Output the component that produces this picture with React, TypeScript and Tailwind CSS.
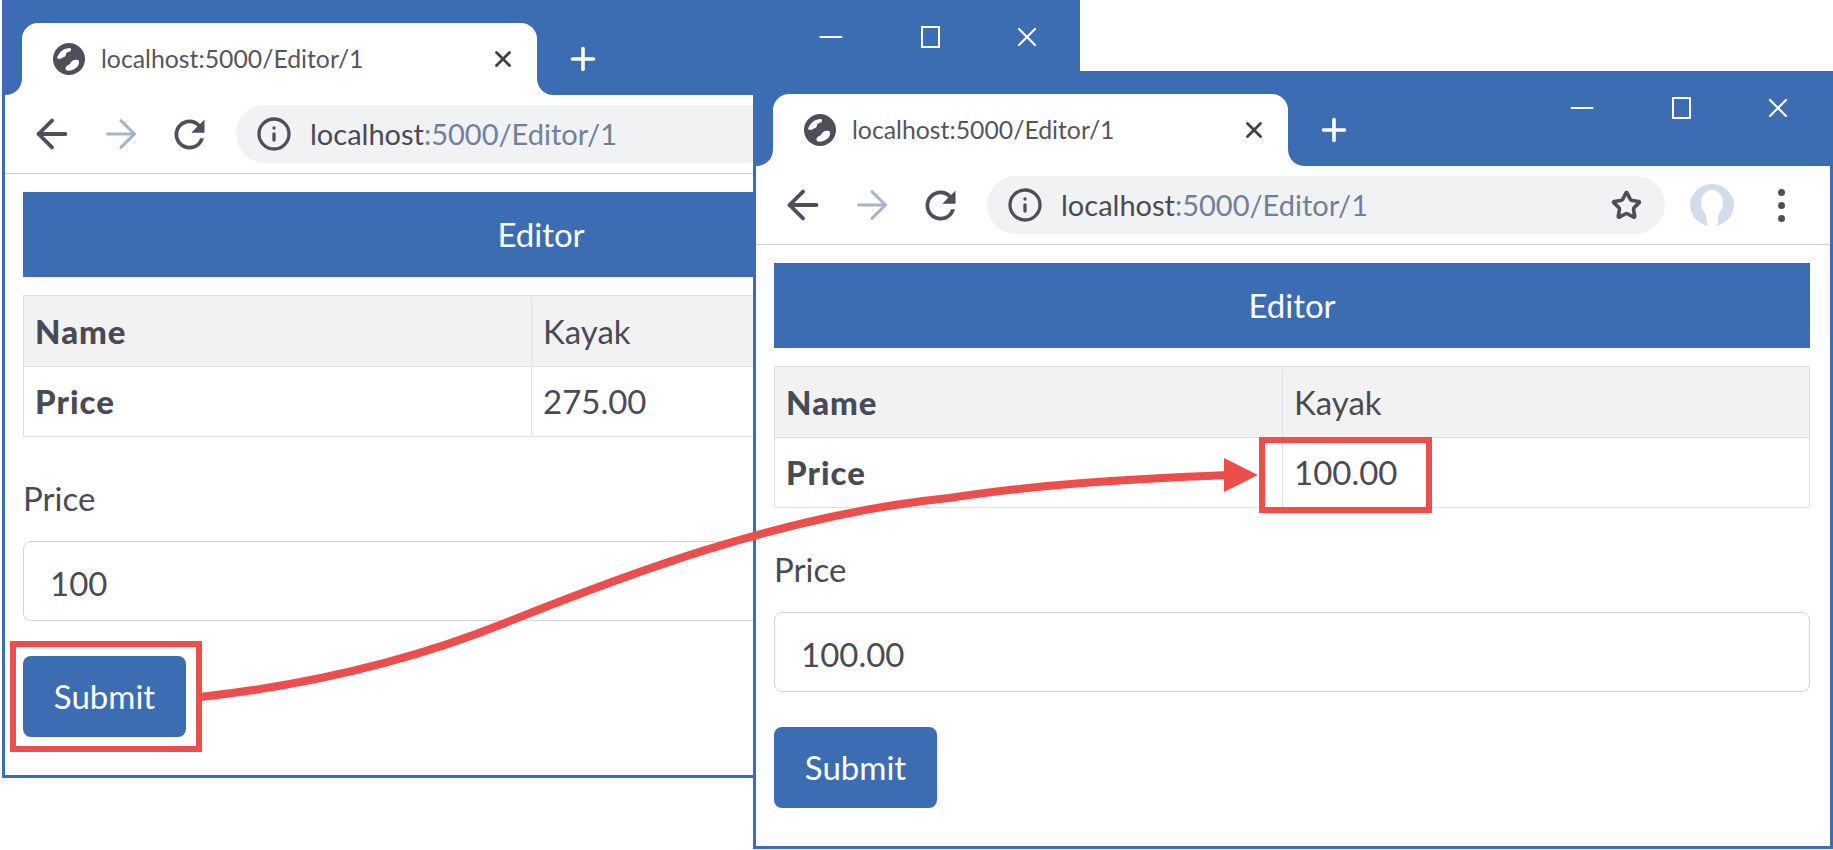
import React from 'react';
import { ArrowLeft, ArrowRight, Info, Star, X, Plus, Minus } from 'lucide-react';

const GlobeIcon = () => (
  <svg className="shrink-0" width="32" height="32" viewBox="0 0 32 32">
    <circle cx="16" cy="16" r="16" fill="#4f4f5b" />
    <path d="M4 15C6 9 11 5 17 5C19 6 18 9 15 9C12 10 14 13 11 14C9 15 6 17 4 15Z" fill="#fff" />
    <path d="M13 27C11 24 15 22 17 21C18 18 21 16 25 17C27 18 26 22 24 24C22 26 17 29 13 27Z" fill="#fff" />
  </svg>
);

const ReloadIcon = () => (
  <svg className="ml-[23px] shrink-0 text-[#4f4f5b]" width="45" height="45" viewBox="0 0 24 24" fill="currentColor">
    <path d="M17.65 6.35A7.958 7.958 0 0 0 12 4c-4.42 0-7.99 3.58-7.99 8s3.57 8 7.99 8c3.73 0 6.84-2.55 7.73-6h-2.08A5.99 5.99 0 0 1 12 18c-3.31 0-6-2.69-6-6s2.69-6 6-6c1.66 0 3.14.69 4.22 1.78L13 11h7V4l-2.35 2.35z" />
  </svg>
);

const Tab = () => (
  <div className="relative mt-[20px] flex h-[72px] w-[515px] items-center rounded-t-[16px] bg-white pl-[31px] pr-[21px]">
    {/* curved feet either side of the tab */}
    <svg className="absolute bottom-0 left-[-17px]" width="17" height="17" viewBox="0 0 17 17">
      <path d="M17 0V17H0C10 17 17 10 17 0Z" fill="#fff" />
    </svg>
    <svg className="absolute bottom-0 right-[-17px]" width="17" height="17" viewBox="0 0 17 17">
      <path d="M0 0V17H17C7 17 0 10 0 0Z" fill="#fff" />
    </svg>
    <GlobeIcon />
    <span className="ml-[16px] flex-1 text-[24.8px] text-[#55555f]">localhost:5000/Editor/1</span>
    <X className="h-[26px] w-[26px] text-[#3f3f4a]" strokeWidth={2.6} />
  </div>
);

const WindowControls = () => (
  <div className="absolute left-[808px] top-[16px] flex w-[230px] items-center justify-between text-white">
    <Minus className="h-[36px] w-[36px]" strokeWidth={1.4} />
    <div className="h-[22px] w-[19px] border-2 border-white" />
    <X className="h-[32px] w-[32px]" strokeWidth={1.6} />
  </div>
);

const Toolbar = () => (
  <div className="flex h-[79px] items-center border-b border-[#c9ced8] bg-white pr-[18px]">
    <ArrowLeft className="ml-[24px] h-[46px] w-[46px] shrink-0 text-[#4f4f5b]" strokeWidth={2} />
    <ArrowRight className="ml-[23px] h-[46px] w-[46px] shrink-0 text-[#a9b3c8]" strokeWidth={1.6} />
    <ReloadIcon />
    <div className="ml-[24px] flex h-[58px] w-[678px] shrink-0 items-center rounded-full bg-[#f1f2f4] pl-[20px] pr-[23px]">
      <Info className="h-[36px] w-[36px]  text-[#4f4f5b]" strokeWidth={2.2} />
      <span className="ml-[18px] flex-1 text-[29px] text-[#4a4a55]">
        localhost<span className="text-[#6f7f9f]">:5000/Editor/1</span>
      </span>
      <Star className="h-[31px] w-[31px] text-[#4f4f5b]" strokeWidth={2.8} />
    </div>
    <svg className="ml-[25px] shrink-0" width="44" height="44" viewBox="0 0 44 44">
      <ellipse cx="22" cy="22" rx="22" ry="21" fill="#d3dcea" />
      <ellipse cx="22" cy="20" rx="11" ry="13" fill="#fff" />
      <path d="M15 28H29L27 44H18Z" fill="#fff" />
    </svg>
    <div className="ml-[44px] flex flex-col gap-[6px]">
      <div className="h-[7px] w-[7px] rounded-full bg-[#4f4f5b]" />
      <div className="h-[7px] w-[7px] rounded-full bg-[#4f4f5b]" />
      <div className="h-[7px] w-[7px] rounded-full bg-[#4f4f5b]" />
    </div>
  </div>
);

const BrowserWindow = ({ price, inputValue, className }: { price: string; inputValue: string; className: string }) => (
  <div className={`absolute flex flex-col border-[3px] border-[#3c6db3] bg-white ${className}`}>
    <div className="relative flex h-[92px] shrink-0 bg-[#3c6db3] pl-[17px]">
      <Tab />
      <Plus className="ml-[28px] mt-[38px] h-[36px] w-[36px] text-white" strokeWidth={2.4} />
      <WindowControls />
    </div>
    <Toolbar />
    <div className="flex w-[1074px] flex-1 flex-col pl-[18px] pr-[20px] pt-[18px] text-[33px] text-[#4a4a55]">
      <div className="flex h-[85px] items-center justify-center bg-[#3c6db3] text-white">Editor</div>
      <div className="mt-[18px] border border-b-0 border-[#dbe0ea]">
        <div className="flex h-[71px] items-center border-b border-[#dbe0ea] bg-[#f2f2f2] pt-[2px]">
          <div className="flex h-full w-[508px] items-center border-r border-[#dbe0ea] pl-[11px] font-black tracking-[1px]">Name</div>
          <div className="pl-[11px]">Kayak</div>
        </div>
        <div className="flex h-[70px] items-center border-b border-[#dbe0ea] pt-[1px]">
          <div className="flex h-full w-[508px] items-center border-r border-[#dbe0ea] pl-[11px] font-black tracking-[1px]">Price</div>
          <div className="pl-[11px]">{price}</div>
        </div>
      </div>
      <label className="mt-[33px] leading-[56px]">Price</label>
      <input
        readOnly
        value={inputValue}
        className="mt-[15px] h-[80px] w-full rounded-[8px] border border-[#ccd5e3] bg-white px-[26px] pt-[3px] text-[#4a4a55] outline-none"
      />
      <button className="mt-[35px] h-[81px] w-[163px] rounded-[8px] bg-[#3c6db3] pt-[1px] text-white">Submit</button>
    </div>
  </div>
);

export default function App() {
  return (
    <div className="relative h-[850px] w-[1833px] overflow-hidden bg-white font-['Lato','Liberation_Sans',sans-serif]">
      <BrowserWindow price="275.00" inputValue="100" className="left-[2px] top-0 h-[778px] w-[1078px] overflow-hidden" />
      <BrowserWindow price="100.00" inputValue="100.00" className="left-[753px] top-[71px] h-[778px] w-[1080px]" />

      {/* callouts drawn over both windows */}
      <div className="absolute left-[10px] top-[641px] h-[111px] w-[192px] border-[6px] border-[#ee4e4b]" />
      <div className="absolute left-[1259px] top-[437px] h-[76px] w-[173px] border-[6px] border-[#ee4e4b]" />
      <svg className="absolute left-0 top-0" width="1833" height="850" viewBox="0 0 1833 850" fill="none">
        <path
          d="M200 697C300 686 400 665 505 623C620 577 780 515 949 498C1040 484 1130 479 1228 475"
          stroke="#ee4e4b"
          strokeWidth="8"
        />
        <path d="M1224 458L1258 475L1224 492Z" fill="#ee4e4b" />
      </svg>
    </div>
  );
}
